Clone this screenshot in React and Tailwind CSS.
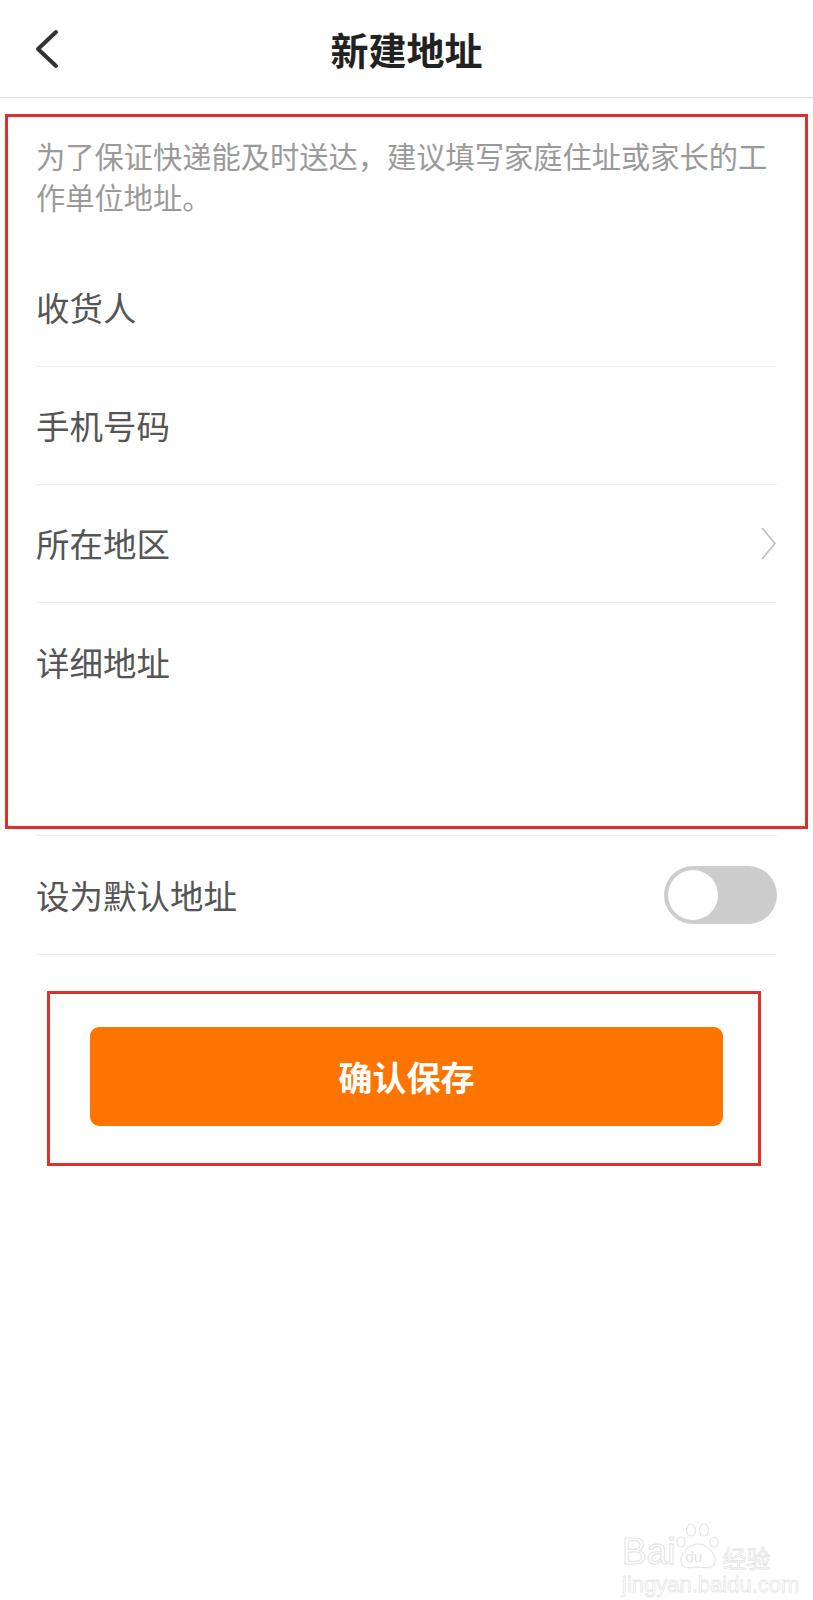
import React from 'react';

const rows = ['收货人', '手机号码', '所在地区'];

function BackIcon() {
  return (
    <svg width="28" height="40" viewBox="0 0 28 40" className="ml-[34px]">
      <polyline points="22,3 4,20 22,37" fill="none" stroke="#333" strokeWidth="4" strokeLinecap="round" strokeLinejoin="round" />
    </svg>
  );
}

function Chevron() {
  return (
    <svg width="17" height="33" viewBox="0 0 17 33">
      <polyline points="2,1 15,16.5 2,32" fill="none" stroke="#bdbdbd" strokeWidth="1.6" />
    </svg>
  );
}

function Watermark() {
  return (
    <div className="absolute left-[622px] top-[1522px] pointer-events-none select-none">
      <div className="flex items-end">
        <span className="text-[37px] leading-none font-['Liberation_Sans',sans-serif] [-webkit-text-stroke:1px_#e4e4e4] text-white">Bai</span>
        <div className="relative w-[46px] h-[48px]">
          <svg width="46" height="48" viewBox="0 0 46 48" className="absolute left-0 top-0">
            <g fill="#fff" stroke="#e4e4e4" strokeWidth="1.2">
              <ellipse cx="6" cy="20" rx="4" ry="5" />
              <ellipse cx="16" cy="8" rx="4.5" ry="6" />
              <ellipse cx="29" cy="8" rx="4.5" ry="6" />
              <ellipse cx="39" cy="20" rx="4" ry="5" />
              <path d="M23 22 C12 22 5 34 6 40 C7 47 16 46 23 45 C30 46 39 47 40 40 C41 34 34 22 23 22 Z" />
            </g>
          </svg>
          <span className="absolute left-[10px] top-[27px] text-[15px] leading-none font-['Liberation_Sans',sans-serif] text-[#e4e4e4]">du</span>
        </div>
        <span className="ml-[1px] text-[24px] leading-none text-white [-webkit-text-stroke:0.8px_#e4e4e4]">经验</span>
      </div>
      <div className="mt-[4px] text-[22px] leading-none font-['Liberation_Sans',sans-serif] text-white [-webkit-text-stroke:0.8px_#e6e6e6]">jingyan.baidu.com</div>
    </div>
  );
}

export default function App() {
  return (
    <div className="relative w-full min-h-[1600px] bg-white font-['Noto_Sans_CJK_SC','Noto_Sans',sans-serif]">
      <div className="grid grid-cols-[1fr_auto_1fr] items-center h-[98px] border-b border-[#dedede]">
        <div className="flex items-center">
          <BackIcon />
        </div>
        <div className="text-[38px] leading-none font-bold text-[#222]">新建地址</div>
        <div></div>
      </div>

      <div className="mt-[16px] mx-[5px] h-[715px] border-[3px] border-[#e0302c] flex flex-col px-[28px]">
        <div className="pt-[18px] text-[29.25px] leading-[41px] text-[#9a9a9a] whitespace-nowrap">
          <p>为了保证快递能及时送达，建议填写家庭住址或家长的工</p>
          <p>作单位地址。</p>
        </div>
        <div className="mt-[32px] flex flex-col flex-1">
          {rows.map((r, i) => (
            <div key={r} className="h-[118px] flex items-center justify-between border-b border-[#eeeeee] text-[33.5px] text-[#555]">
              <span>{r}</span>
              {i === 2 && <Chevron />}
            </div>
          ))}
          <div className="flex-1 pt-[36px] text-[33.5px] leading-[46px] text-[#555]">详细地址</div>
        </div>
      </div>

      <div className="mt-[6px] px-[36px]">
        <div className="h-[120px] flex items-center justify-between border-y border-[#eeeeee]">
          <span className="text-[33.5px] text-[#555]">设为默认地址</span>
          <div className="w-[113px] h-[58px] rounded-full bg-[#cdcdcd] flex items-center pl-[4px]">
            <div className="w-[50px] h-[50px] rounded-full bg-white"></div>
          </div>
        </div>
      </div>

      <div className="mt-[36px] ml-[47px] w-[714px] h-[175px] border-[3px] border-[#e0302c] pl-[40px] pr-[35px] pt-[33px]">
        <button className="w-full h-[99px] rounded-[9px] bg-[#fd7500] text-white text-[34px] font-bold flex items-center justify-center">
          确认保存
        </button>
      </div>

      <Watermark />
    </div>
  );
}
